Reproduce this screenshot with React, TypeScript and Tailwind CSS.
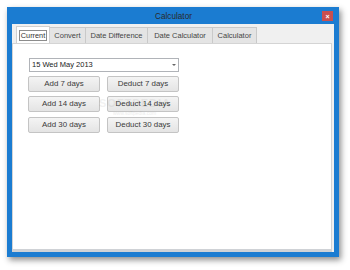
import React from "react";

const tabs = [
  { label: "Current", w: "w-[34px]" },
  { label: "Convert", w: "w-[36px]" },
  { label: "Date Difference", w: "w-[62px]" },
  { label: "Date Calculator", w: "w-[65px]" },
  { label: "Calculator", w: "w-[44px]" },
];

const rows = [
  ["Add 7 days", "Deduct 7 days"],
  ["Add 14 days", "Deduct 14 days"],
  ["Add 30 days", "Deduct 30 days"],
];

function Btn({ children }: { children: React.ReactNode }) {
  return (
    <div className="w-[72px] h-[16px] flex items-center justify-center rounded-[2px] border border-[#c4c4c4] bg-gradient-to-b from-[#f4f4f4] to-[#e4e4e4] text-[7.9px] text-[#3a3a3a]">
      {children}
    </div>
  );
}

export default function App() {
  return (
    <div
      className="w-[350px] h-[270px] bg-white pt-[7px] pl-[7px]"
      style={{ fontFamily: '"Liberation Sans", Arial, sans-serif' }}
    >
      <div className="w-[332px] h-[250px] bg-[#1b7cd1] flex flex-col shadow-[2px_3px_6px_rgba(0,0,0,0.45)]">
        {/* title bar */}
        <div className="h-[17px] flex items-start">
          <div className="w-[17px]" />
          <div className="flex-1 text-center text-[8.2px] text-[#2a2a2a] pt-[4px] pl-[1px]">
            Calculator
          </div>
          <div className="mt-[4px] mr-[6px] w-[11px] h-[10px] bg-[#c94f4f] flex items-center justify-center">
            <span className="text-[7px] leading-none text-white font-bold">×</span>
          </div>
        </div>
        {/* client */}
        <div className="flex-1 mx-[5px] mb-[5px] bg-[#f0f0f0] flex flex-col pt-[2px] pr-[2px]">
          {/* tabs */}
          <div className="flex pl-[4px] h-[17px] items-end">
            {tabs.map((t, i) =>
              i === 0 ? (
                <div
                  key={t.label}
                  className={`${t.w} h-[18px] bg-white border-t border-l border-r border-[#d0d0d0] flex items-center justify-center -mb-[1px] relative`}
                >
                  <span className="border border-[#8c8c8c] px-[1px] h-[11px] leading-[10px] text-[7.3px] text-[#333]">
                    {t.label}
                  </span>
                </div>
              ) : (
                <div
                  key={t.label}
                  className={`${t.w} h-[16px] bg-[#e4e4e4] border-t border-r border-[#c9c9c9] flex items-center justify-center text-[7.5px] text-[#444]`}
                >
                  {t.label}
                </div>
              )
            )}
          </div>
          {/* panel */}
          <div className="flex-1 bg-white border border-[#d4d4d4] border-b-[3px] border-b-[#cfd2d6] pl-[16px] pt-[14px] relative">
            <div className="w-[150px] h-[14px] border border-[#b0b3b8] flex items-center justify-between pl-[2px] pr-[2px]">
              <span className="text-[7.5px] text-[#222] font-medium">15 Wed May 2013</span>
              <span className="w-0 h-0 border-l-[2px] border-r-[2px] border-t-[2px] border-l-transparent border-r-transparent border-t-[#666]" />
            </div>
            <div className="flex flex-col gap-[4px] mt-[4px] -ml-[1px]">
              {rows.map((r, i) => (
                <div key={i} className={`flex gap-[7px] ${i === 2 ? "mt-[1px]" : ""}`}>
                  <Btn>{r[0]}</Btn>
                  <Btn>{r[1]}</Btn>
                </div>
              ))}
            </div>
            <div className="absolute left-[86px] top-[51px] text-[11px] font-bold tracking-[1px] text-[#000] opacity-[0.05]">
              SOFTPEDIA
            </div>
            <div className="absolute left-[100px] top-[66px] text-[5px] text-[#000] opacity-[0.08]">
              www.softpedia.com
            </div>
          </div>
        </div>
      </div>
    </div>
  );
}
